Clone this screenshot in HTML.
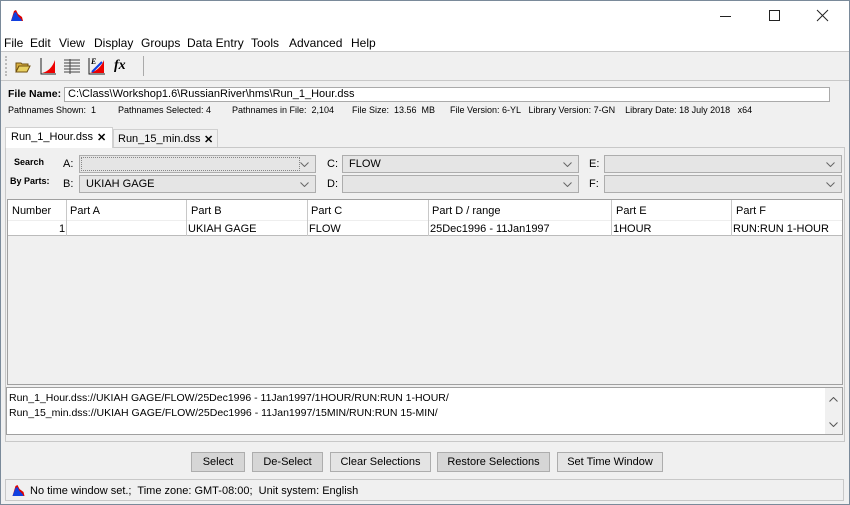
<!DOCTYPE html>
<html><head><style>
*{box-sizing:border-box;margin:0;padding:0}
body{width:850px;height:505px;background:#f0f0f0;font-family:"Liberation Sans",Arial,sans-serif;position:relative;overflow:hidden;color:#000}
.a{position:absolute;white-space:nowrap}
.s{font-size:11px}
.xs{font-size:9px}
.m{position:absolute;top:36px;font-size:12px}
.combo{position:absolute;height:18px;border:1px solid #adadad;background:#e5e5e5;font-size:11px;line-height:16px;padding-left:6px}
.combo svg{position:absolute;right:6px;top:6px}
.btn{position:absolute;top:452px;height:20px;border:1px solid #adadad;font-size:11px;text-align:center;line-height:18px}
.col{position:absolute;top:0;height:36px;border-left:1px solid #c8c8c8}
</style></head><body>
<div class="a" style="left:0;top:0;width:850px;height:505px;border:1px solid #7a8a9a"></div>
<div class="a" style="left:1px;top:1px;width:848px;height:50px;background:#fff"></div>
<svg class="a" style="left:10px;top:8px" width="14" height="14" viewBox="0 0 14 14"><path d="M1 13 L4 3 L6 2 L8 6 L12 9 L13 13Z" fill="#d00"/><path d="M1 13 L4 5 L6 4 L8 8 L11 11 L12 13Z" fill="#1040e0"/></svg>
<svg class="a" style="left:720px;top:8px" width="110" height="16"><path d="M0 8.5h11" stroke="#222"/><rect x="49.5" y="2.5" width="10" height="10" fill="none" stroke="#222"/><path d="M97 2l11 11M108 2L97 13" stroke="#222"/></svg>
<div class="m" style="left:4px">File</div><div class="m" style="left:30px">Edit</div><div class="m" style="left:59px">View</div><div class="m" style="left:94px">Display</div><div class="m" style="left:141px">Groups</div><div class="m" style="left:187px">Data Entry</div><div class="m" style="left:251px">Tools</div><div class="m" style="left:289px">Advanced</div><div class="m" style="left:351px">Help</div>
<div class="a" style="left:1px;top:51px;width:848px;height:1px;background:#c8c8c8"></div>
<div class="a" style="left:1px;top:80px;width:848px;height:1px;background:#c8c8c8"></div>
<div class="a" style="left:5px;top:56px;width:2px;height:20px;border-left:2px dotted #bbb"></div>
<svg class="a" style="left:15px;top:58px" width="16" height="16"><path d="M1 5h5l1 1h6v2H4L1 14Z" fill="#d8b040" stroke="#705010"/><path d="M4 8h11l-3 6H1Z" fill="#e8d060" stroke="#705010"/></svg>
<svg class="a" style="left:39px;top:57px" width="18" height="19"><path d="M2 1v16h15" stroke="#222" fill="none"/><path d="M3 16 Q12 14 16 3 V16Z" fill="#e00"/></svg>
<svg class="a" style="left:63px;top:58px" width="18" height="17"><g stroke="#444"><path d="M1 2h16M1 5h16M1 8h16M1 11h16M1 14h16"/><path d="M7 1v15" /></g></svg>
<svg class="a" style="left:87px;top:56px" width="19" height="20"><path d="M2 2v16h16" stroke="#222" fill="none"/><path d="M3 17 Q13 14 17 4 V17Z" fill="#e00"/><path d="M5 16L15 6" stroke="#1040e0" stroke-width="2"/><text x="4" y="8" font-size="8" font-style="italic" font-weight="bold" font-family="Liberation Serif">E</text></svg>
<div class="a" style="left:114px;top:58px;font-family:'Liberation Serif',serif;font-style:italic;font-weight:bold;font-size:14px">fx</div>
<div class="a" style="left:143px;top:56px;width:1px;height:20px;background:#aaa"></div>
<div class="a" style="left:8px;top:88px;font-weight:bold;font-size:10.5px">File Name:</div>
<div class="a s" style="left:64px;top:87px;width:766px;height:15px;background:#fff;border:1px solid #aaa;line-height:13px;padding-left:3px">C:\Class\Workshop1.6\RussianRiver\hms\Run_1_Hour.dss</div>
<div class="a xs" style="left:8px;top:105px">Pathnames Shown:&nbsp; 1</div>
<div class="a xs" style="left:118px;top:105px">Pathnames Selected: 4</div>
<div class="a xs" style="left:232px;top:105px">Pathnames in File:&nbsp; 2,104</div>
<div class="a xs" style="left:352px;top:105px">File Size:&nbsp; 13.56&nbsp; MB</div>
<div class="a xs" style="left:450px;top:105px">File Version: 6-YL&nbsp;&nbsp; Library Version: 7-GN&nbsp;&nbsp;&nbsp; Library Date: 18 July 2018&nbsp;&nbsp; x64</div>
<div class="a" style="left:5px;top:147px;width:840px;height:295px;border:1px solid #c8c8c8"></div>
<div class="a" style="left:5px;top:127px;width:108px;height:21px;background:#fff;border:1px solid #d0d0d0;border-bottom:none"></div>
<div class="a s" style="left:11px;top:131px">Run_1_Hour.dss</div><div class="a s" style="left:97px;top:131px;font-weight:bold">✕</div>
<div class="a" style="left:113px;top:129px;width:105px;height:18px;border:1px solid #d0d0d0;border-bottom:none"></div>
<div class="a s" style="left:118px;top:133px">Run_15_min.dss</div><div class="a s" style="left:204px;top:133px;font-weight:bold">✕</div>
<div class="a" style="left:14px;top:157px;font-size:9px;font-weight:bold">Search</div>
<div class="a" style="left:10px;top:176px;font-size:9px;font-weight:bold">By Parts:</div>
<div class="a s" style="left:63px;top:158px">A:</div><div class="a s" style="left:63px;top:178px">B:</div>
<div class="a s" style="left:327px;top:158px">C:</div><div class="a s" style="left:327px;top:178px">D:</div>
<div class="a s" style="left:589px;top:158px">E:</div><div class="a s" style="left:589px;top:178px">F:</div>
<div class="combo" style="left:79px;top:155px;width:237px"><div class="a" style="left:1px;top:1px;width:219px;height:14px;border:1px dotted #888"></div><svg width="9" height="5"><path d="M0.5 0.5l4 4 4-4" stroke="#666" fill="none"/></svg></div>
<div class="combo" style="left:79px;top:175px;width:237px">UKIAH GAGE<svg width="9" height="5"><path d="M0.5 0.5l4 4 4-4" stroke="#666" fill="none"/></svg></div>
<div class="combo" style="left:342px;top:155px;width:237px">FLOW<svg width="9" height="5"><path d="M0.5 0.5l4 4 4-4" stroke="#666" fill="none"/></svg></div>
<div class="combo" style="left:342px;top:175px;width:237px"><svg width="9" height="5"><path d="M0.5 0.5l4 4 4-4" stroke="#666" fill="none"/></svg></div>
<div class="combo" style="left:604px;top:155px;width:238px"><svg width="9" height="5"><path d="M0.5 0.5l4 4 4-4" stroke="#666" fill="none"/></svg></div>
<div class="combo" style="left:604px;top:175px;width:238px"><svg width="9" height="5"><path d="M0.5 0.5l4 4 4-4" stroke="#666" fill="none"/></svg></div>
<div class="a" style="left:7px;top:199px;width:836px;height:186px;border:1px solid #a0a0a0;background:#f0f0f0">
 <div class="a" style="left:0;top:0;width:834px;height:36px;background:#fff;border-bottom:1px solid #bbb"></div>
 <div class="a" style="left:0;top:20px;width:834px;height:1px;background:#eee"></div>
 <div class="col" style="left:58px"></div><div class="col" style="left:178px"></div><div class="col" style="left:299px"></div><div class="col" style="left:420px"></div><div class="col" style="left:603px"></div><div class="col" style="left:723px"></div>
 <div class="a s" style="left:4px;top:5px">Number</div><div class="a s" style="left:62px;top:5px">Part A</div><div class="a s" style="left:183px;top:5px">Part B</div><div class="a s" style="left:303px;top:5px">Part C</div><div class="a s" style="left:424px;top:5px">Part D / range</div><div class="a s" style="left:608px;top:5px">Part E</div><div class="a s" style="left:728px;top:5px">Part F</div>
 <div class="a s" style="left:51px;top:23px">1</div><div class="a s" style="left:180px;top:23px">UKIAH GAGE</div><div class="a s" style="left:301px;top:23px">FLOW</div><div class="a s" style="left:422px;top:23px">25Dec1996 - 11Jan1997</div><div class="a s" style="left:605px;top:23px">1HOUR</div><div class="a s" style="left:725px;top:23px">RUN:RUN 1-HOUR</div>
</div>
<div class="a" style="left:6px;top:387px;width:837px;height:48px;border:1px solid #a0a0a0;background:#fff">
 <div class="a" style="left:2px;top:3px;font-size:10.5px;line-height:15px">Run_1_Hour.dss://UKIAH GAGE/FLOW/25Dec1996 - 11Jan1997/1HOUR/RUN:RUN 1-HOUR/<br>Run_15_min.dss://UKIAH GAGE/FLOW/25Dec1996 - 11Jan1997/15MIN/RUN:RUN 15-MIN/</div>
 <div class="a" style="left:818px;top:0;width:17px;height:46px;background:#f0f0f0"></div>
 <svg class="a" style="left:822px;top:9px" width="9" height="5"><path d="M0.5 4.5l4-4 4 4" stroke="#555" fill="none"/></svg>
 <svg class="a" style="left:822px;top:34px" width="9" height="5"><path d="M0.5 0.5l4 4 4-4" stroke="#555" fill="none"/></svg>
</div>
<div class="btn" style="left:191px;width:54px;background:#d6d6d6">Select</div>
<div class="btn" style="left:252px;width:71px;background:#d6d6d6">De-Select</div>
<div class="btn" style="left:330px;width:101px;background:#e4e4e4">Clear Selections</div>
<div class="btn" style="left:437px;width:113px;background:#d6d6d6">Restore Selections</div>
<div class="btn" style="left:557px;width:106px;background:#e4e4e4">Set Time Window</div>
<div class="a" style="left:5px;top:479px;width:839px;height:22px;border:1px solid #c8c8c8"></div>
<svg class="a" style="left:11px;top:483px" width="15" height="14" viewBox="0 0 14 14"><path d="M1 13 L4 3 L6 2 L8 6 L12 9 L13 13Z" fill="#d00"/><path d="M1 13 L4 5 L6 4 L8 8 L11 11 L12 13Z" fill="#1040e0"/></svg>
<div class="a s" style="left:30px;top:485px">No time window set.;&nbsp; Time zone: GMT-08:00;&nbsp; Unit system: English</div>
</body></html>
